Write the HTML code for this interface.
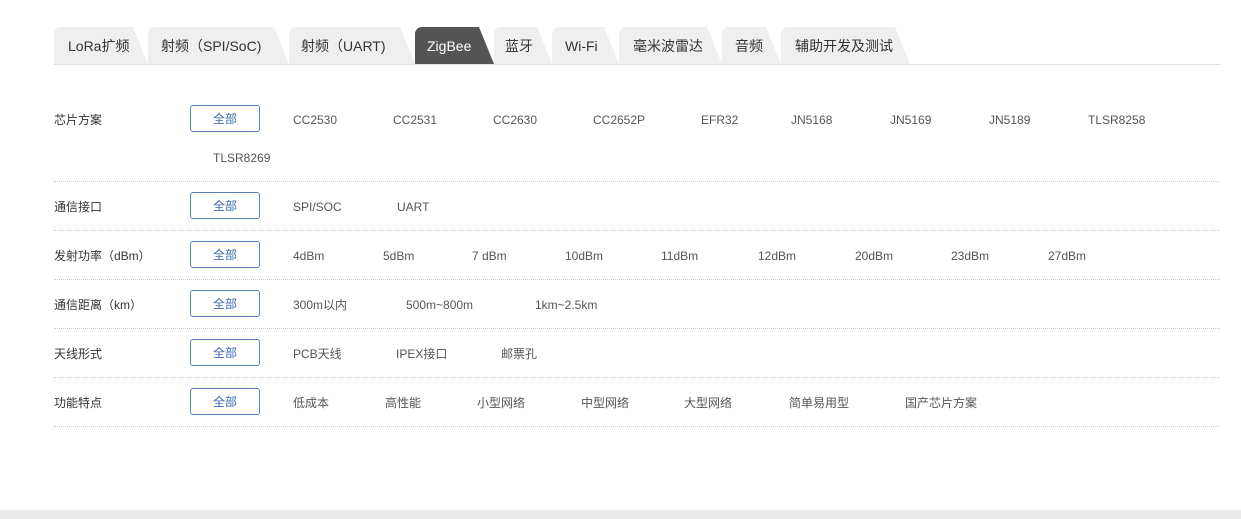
<!DOCTYPE html>
<html><head><meta charset="utf-8"><style>
body{margin:0;width:1241px;height:519px;background:#fff;position:relative;overflow:hidden;font-family:"Liberation Sans","Noto Sans CJK SC",sans-serif;}
.tab{position:absolute;top:27px;height:37px;background:#efefef;border-top-left-radius:7px;clip-path:polygon(0 0,calc(100% - 15px) 0,100% 100%,0 100%);font-size:14px;color:#333;line-height:38px;padding-left:14px;box-sizing:border-box;}
.tab.on{background:#555;color:#fff;}
.line{position:absolute;left:54px;top:64px;width:1166px;height:1px;background:#ddd;}
.t{position:absolute;font-size:12px;color:#555;line-height:16px;white-space:nowrap;top:1px;}
.lab{color:#333;}
.btn{position:absolute;left:190px;width:68px;height:25px;border:1px solid #5b80b8;border-radius:3px;color:#3d6bb0;font-size:12px;text-align:center;line-height:26px;}
.sep{position:absolute;left:54px;width:1166px;border-top:1px dotted #c8c8c8;}
.foot{position:absolute;left:0;top:510px;width:1241px;height:9px;background:#ebebeb;}
.r{position:absolute;left:0;width:1241px;height:30px;}
</style></head><body>
<div class="tab" style="left:54px;width:94px">LoRa扩频</div>
<div class="tab" style="left:148px;width:141px;padding-left:13px">射频（SPI/SoC)</div>
<div class="tab" style="left:289px;width:126px;padding-left:12px">射频（UART)</div>
<div class="tab on" style="left:415px;width:79px;padding-left:12px">ZigBee</div>
<div class="tab" style="left:494px;width:58px;padding-left:11px">蓝牙</div>
<div class="tab" style="left:552px;width:67px;padding-left:13px">Wi-Fi</div>
<div class="tab" style="left:619px;width:103px">毫米波雷达</div>
<div class="tab" style="left:722px;width:59px;padding-left:13px">音频</div>
<div class="tab" style="left:781px;width:129px">辅助开发及测试</div>
<div class="line"></div>

<div class="t lab" style="left:54px;top:112px">芯片方案</div>
<div class="btn" style="top:105px">全部</div>
<div class="t" style="left:293px;top:112px">CC2530</div>
<div class="t" style="left:393px;top:112px">CC2531</div>
<div class="t" style="left:493px;top:112px">CC2630</div>
<div class="t" style="left:593px;top:112px">CC2652P</div>
<div class="t" style="left:701px;top:112px">EFR32</div>
<div class="t" style="left:791px;top:112px">JN5168</div>
<div class="t" style="left:890px;top:112px">JN5169</div>
<div class="t" style="left:989px;top:112px">JN5189</div>
<div class="t" style="left:1088px;top:112px">TLSR8258</div>
<div class="t" style="left:213px;top:150px">TLSR8269</div>
<div class="sep" style="top:181px"></div>

<div class="t lab" style="left:54px;top:199px">通信接口</div>
<div class="btn" style="top:192px">全部</div>
<div class="t" style="left:293px;top:199px">SPI/SOC</div>
<div class="t" style="left:397px;top:199px">UART</div>
<div class="sep" style="top:230px"></div>

<div class="t lab" style="left:54px;top:248px">发射功率（dBm）</div>
<div class="btn" style="top:241px">全部</div>
<div class="t" style="left:293px;top:248px">4dBm</div>
<div class="t" style="left:383px;top:248px">5dBm</div>
<div class="t" style="left:472px;top:248px">7 dBm</div>
<div class="t" style="left:565px;top:248px">10dBm</div>
<div class="t" style="left:661px;top:248px">11dBm</div>
<div class="t" style="left:758px;top:248px">12dBm</div>
<div class="t" style="left:855px;top:248px">20dBm</div>
<div class="t" style="left:951px;top:248px">23dBm</div>
<div class="t" style="left:1048px;top:248px">27dBm</div>
<div class="sep" style="top:279px"></div>

<div class="t lab" style="left:54px;top:297px">通信距离（km）</div>
<div class="btn" style="top:290px">全部</div>
<div class="t" style="left:293px;top:297px">300m以内</div>
<div class="t" style="left:406px;top:297px">500m~800m</div>
<div class="t" style="left:535px;top:297px">1km~2.5km</div>
<div class="sep" style="top:328px"></div>

<div class="t lab" style="left:54px;top:346px">天线形式</div>
<div class="btn" style="top:339px">全部</div>
<div class="t" style="left:293px;top:346px">PCB天线</div>
<div class="t" style="left:396px;top:346px">IPEX接口</div>
<div class="t" style="left:501px;top:346px">邮票孔</div>
<div class="sep" style="top:377px"></div>

<div class="t lab" style="left:54px;top:395px">功能特点</div>
<div class="btn" style="top:388px">全部</div>
<div class="t" style="left:293px;top:395px">低成本</div>
<div class="t" style="left:385px;top:395px">高性能</div>
<div class="t" style="left:477px;top:395px">小型网络</div>
<div class="t" style="left:581px;top:395px">中型网络</div>
<div class="t" style="left:684px;top:395px">大型网络</div>
<div class="t" style="left:789px;top:395px">简单易用型</div>
<div class="t" style="left:905px;top:395px">国产芯片方案</div>
<div class="sep" style="top:426px"></div>
<div class="foot"></div>
</body></html>
